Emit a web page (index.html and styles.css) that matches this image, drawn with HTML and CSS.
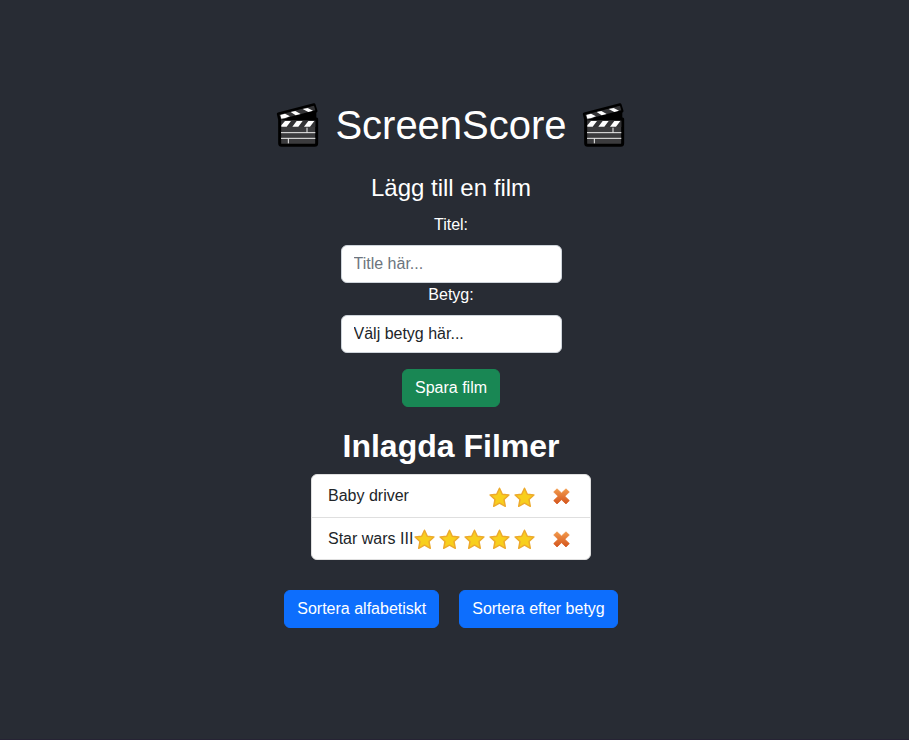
FILE: index.html
```html
<!DOCTYPE html>
<html lang="sv">
<head>
<meta charset="utf-8">
<title>ScreenScore</title>
<link rel="stylesheet" href="styles.css">
</head>
<body>
<svg class="defs" aria-hidden="true">
  <defs>
    <linearGradient id="arm" x1="0" y1="0" x2="0" y2="1"><stop offset="0" stop-color="#f29a4c"/><stop offset="1" stop-color="#d4551d"/></linearGradient>
    <symbol id="clapper" viewBox="21 21 132 138">
      <path d="M28 57L135 29L141 48L60 69L143 72V145Q143 151 137 151H38Q32 151 32 145V74Z" fill="#3b3b3d" stroke="#000" stroke-width="9" stroke-linejoin="round"/>
      <path d="M34 75L142 46V76H34Z" fill="#000"/>
      <path d="M31 59L135 32L139 46L36 73Z" fill="#343436"/>
      <path d="M34 60L48 56L63 64L49 69L37 71ZM65 51L79 48L95 57L80 61ZM101 42L116 39L132 47L118 51Z" fill="#fff"/>
      <path d="M37 77H139V96H37Z" fill="#343436"/>
      <path d="M48 78H66L53 95H37V91ZM83 78H101L88 95H70ZM118 78H136L123 95H105Z" fill="#fff"/>
      <path d="M36 113H139M36 130H139M114 98V113M58 130V145" fill="none" stroke="#eee" stroke-width="3"/>
    </symbol>
    <symbol id="star" viewBox="0 0 21 21">
      <path d="M10.5 1.2L13.3 7.2L19.9 8L15 12.5L16.3 19.3L10.5 16.2L4.7 19.3L6 12.5L1.1 8L7.7 7.2Z" fill="#f8cf1c" stroke="#edaa2c" stroke-width="1.5" stroke-linejoin="round"/>
    </symbol>
    <symbol id="cross" viewBox="0 0 17 17">
      <path d="M4 .8L8.5 5L13 .8L16.3 4L11.9 8.3L16.3 12.6L13 15.9L8.5 11.7L4 15.9L.7 12.6L5.1 8.3L.7 4Z" fill="url(#arm)" stroke="url(#arm)" stroke-width=".8" stroke-linejoin="round"/>
    </symbol>
  </defs>
</svg>
<main class="app">
  <h1 class="brand">
    <svg class="clapper"><use href="#clapper"/></svg>
    <span>ScreenScore</span>
    <svg class="clapper"><use href="#clapper"/></svg>
  </h1>
  <form class="film-form">
    <h2 class="form-title">Lägg till en film</h2>
    <label class="label" for="title">Titel:</label>
    <input class="control" id="title" type="text" placeholder="Title här...">
    <label class="label" for="rating">Betyg:</label>
    <select class="control" id="rating"><option>Välj betyg här...</option></select>
    <button class="btn btn-success" type="button">Spara film</button>
  </form>
  <h2 class="list-title">Inlagda Filmer</h2>
  <ul class="films">
    <li class="film">
      <span class="name">Baby driver</span>
      <span class="stars">
        <svg class="star"><use href="#star"/></svg>
        <svg class="star"><use href="#star"/></svg>
      </span>
      <svg class="cross"><use href="#cross"/></svg>
    </li>
    <li class="film">
      <span class="name">Star wars III</span>
      <span class="stars">
        <svg class="star"><use href="#star"/></svg>
        <svg class="star"><use href="#star"/></svg>
        <svg class="star"><use href="#star"/></svg>
        <svg class="star"><use href="#star"/></svg>
        <svg class="star"><use href="#star"/></svg>
      </span>
      <svg class="cross"><use href="#cross"/></svg>
    </li>
  </ul>
  <div class="sorting">
    <button class="btn btn-primary" type="button">Sortera alfabetiskt</button>
    <button class="btn btn-primary" type="button">Sortera efter betyg</button>
  </div>
</main>
</body>
</html>
```
FILE: styles.css
```css
* { box-sizing: border-box; }
body {
  margin: 0;
  height: 740px;
  overflow: hidden;
  background: #282c34;
  border-bottom: 1px solid #262334;
  color: #fff;
  font: 16px/24px "Liberation Sans", Arial, sans-serif;
}
h1, h2, ul { margin: 0; padding: 0; font-weight: 400; }
.defs { position: absolute; width: 0; height: 0; }
.app {
  display: flex;
  flex-direction: column;
  align-items: center;
  width: 902px;
  padding-top: 101px;
}
.brand { display: flex; align-items: center; gap: 15px; height: 48px; font-size: 40px; line-height: 48px; }
.clapper { width: 44px; height: 46px; }
.film-form { display: flex; flex-direction: column; align-items: center; width: 221px; margin-top: 24px; }
.form-title { margin-bottom: 11px; font-size: 24px; line-height: 29px; }
.label { margin-bottom: 8px; }
.control {
  width: 221px;
  height: 38px;
  padding: 6px 12px;
  border: 1px solid #ced4da;
  border-radius: 6px;
  background: #fff;
  color: #212529;
  font: inherit;
  appearance: none;
}
.control::placeholder { color: #6c757d; opacity: 1; }
.btn { height: 38px; padding: 6px 12px; border: 1px solid; border-radius: 6px; color: #fff; font: inherit; white-space: nowrap; }
.btn-success { margin-top: 16px; background: #198754; border-color: #198754; }
.btn-primary { background: #0d6efd; border-color: #0d6efd; }
.list-title { margin-top: 20px; font-size: 32px; font-weight: 700; line-height: 38px; }
.films { width: 280px; margin-top: 9px; border: 1px solid #dfdfdf; border-radius: 6px; background: #fff; color: #212529; list-style: none; overflow: hidden; }
.film { display: flex; align-items: center; height: 42px; padding: 0 20px 0 16px; }
.film + .film { border-top: 1px solid #dfdfdf; }
.name { white-space: nowrap; }
.stars { display: flex; gap: 4px; margin-left: auto; margin-right: 18px; padding-top: 2px; }
.star { width: 21px; height: 21px; }
.cross { width: 17px; height: 17px; margin-top: 1px; flex: none; }
.sorting { display: flex; gap: 20px; margin-top: 30px; }
```
